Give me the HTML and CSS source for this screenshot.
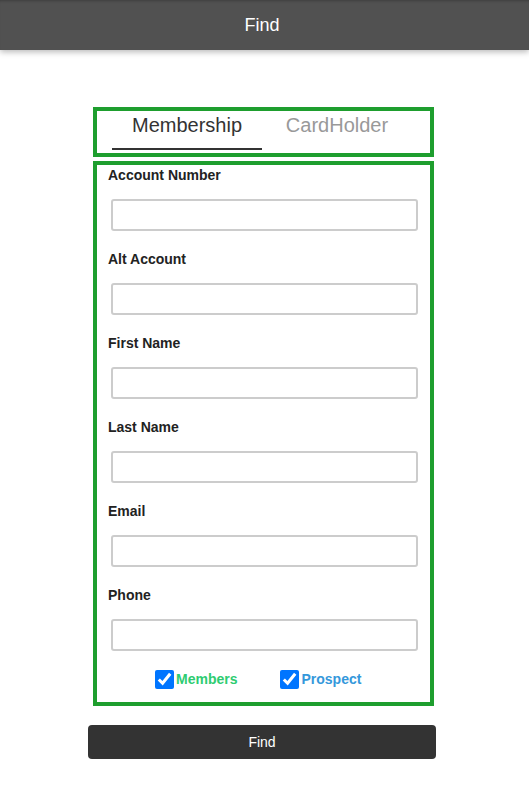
FILE: index.html
```html
<!DOCTYPE html>
<html>
<head>
<meta charset="utf-8">
<link rel="stylesheet" href="styles.css">
</head>
<body>
<header class="topbar">Find</header>
<main class="wrap">
  <div class="tabbox">
    <div class="tabs">
      <div class="tab active">Membership</div>
      <div class="tab">CardHolder</div>
    </div>
  </div>
  <form class="formbox">
    <div class="field"><label class="lbl">Account Number</label><input class="inp" type="text"></div>
    <div class="field"><label class="lbl">Alt Account</label><input class="inp" type="text"></div>
    <div class="field"><label class="lbl">First Name</label><input class="inp" type="text"></div>
    <div class="field"><label class="lbl">Last Name</label><input class="inp" type="text"></div>
    <div class="field"><label class="lbl">Email</label><input class="inp" type="text"></div>
    <div class="field last"><label class="lbl">Phone</label><input class="inp" type="text"></div>
    <div class="checks">
      <label class="chk members"><input type="checkbox" checked>Members</label>
      <label class="chk prospect"><input type="checkbox" checked>Prospect</label>
    </div>
  </form>
  <button class="findbtn" type="button">Find</button>
</main>
</body>
</html>
```
FILE: styles.css
```css
html, body {
  margin: 0;
  padding: 0;
  background: #ffffff;
  font-family: "Liberation Sans", Arial, sans-serif;
}
.topbar {
  height: 50px;
  background: #515151;
  color: #ffffff;
  font-size: 18px;
  display: flex;
  align-items: center;
  justify-content: center;
  padding-right: 5px;
  box-shadow: 0 2px 6px rgba(0, 0, 0, 0.28), inset 0 3px 3px -2px rgba(0, 0, 0, 0.25);
}
.wrap {
  width: 348px;
  margin: 57px 0 0 88px;
  display: flex;
  flex-direction: column;
}
.tabbox {
  margin: 0 2px 0 5px;
  border: 4px solid #1e9e2e;
  height: 42px;
}
.tabs {
  display: flex;
  padding-left: 15px;
}
.tab {
  width: 150px;
  box-sizing: border-box;
  text-align: center;
  font-size: 20px;
  line-height: 23px;
  padding: 3px 0 11px;
  color: #999999;
  border-bottom: 2px solid transparent;
}
.tab.active {
  color: #333333;
  border-bottom-color: #333333;
}
.formbox {
  margin: 4px 2px 0 5px;
  border: 4px solid #1e9e2e;
  padding: 2px 12px 13px 11px;
  display: flex;
  flex-direction: column;
}
.field {
  display: flex;
  flex-direction: column;
  margin-bottom: 20px;
}
.field.last {
  margin-bottom: 18px;
}
.lbl {
  font-size: 14px;
  font-weight: bold;
  line-height: 16px;
  color: #222222;
  margin-bottom: 16px;
}
.inp {
  margin: 0 0 0 3px;
  height: 32px;
  box-sizing: border-box;
  border: 2px solid #cccccc;
  border-radius: 3px;
  padding: 0 8px;
  font-size: 14px;
  outline: none;
}
.checks {
  display: flex;
  align-items: center;
  gap: 43px;
  padding-left: 47px;
  height: 20px;
}
.chk {
  display: flex;
  align-items: center;
  font-size: 14px;
  font-weight: bold;
}
.chk input {
  width: 19px;
  height: 19px;
  margin: 0 2px 0 0;
  accent-color: #0075ff;
}
.members { color: #2ecc71; }
.prospect { color: #3498db; }
.findbtn {
  margin-top: 19px;
  height: 34px;
  background: #333333;
  color: #ffffff;
  border: none;
  border-radius: 4px;
  font-family: "Liberation Sans", Arial, sans-serif;
  font-size: 14px;
}
```
